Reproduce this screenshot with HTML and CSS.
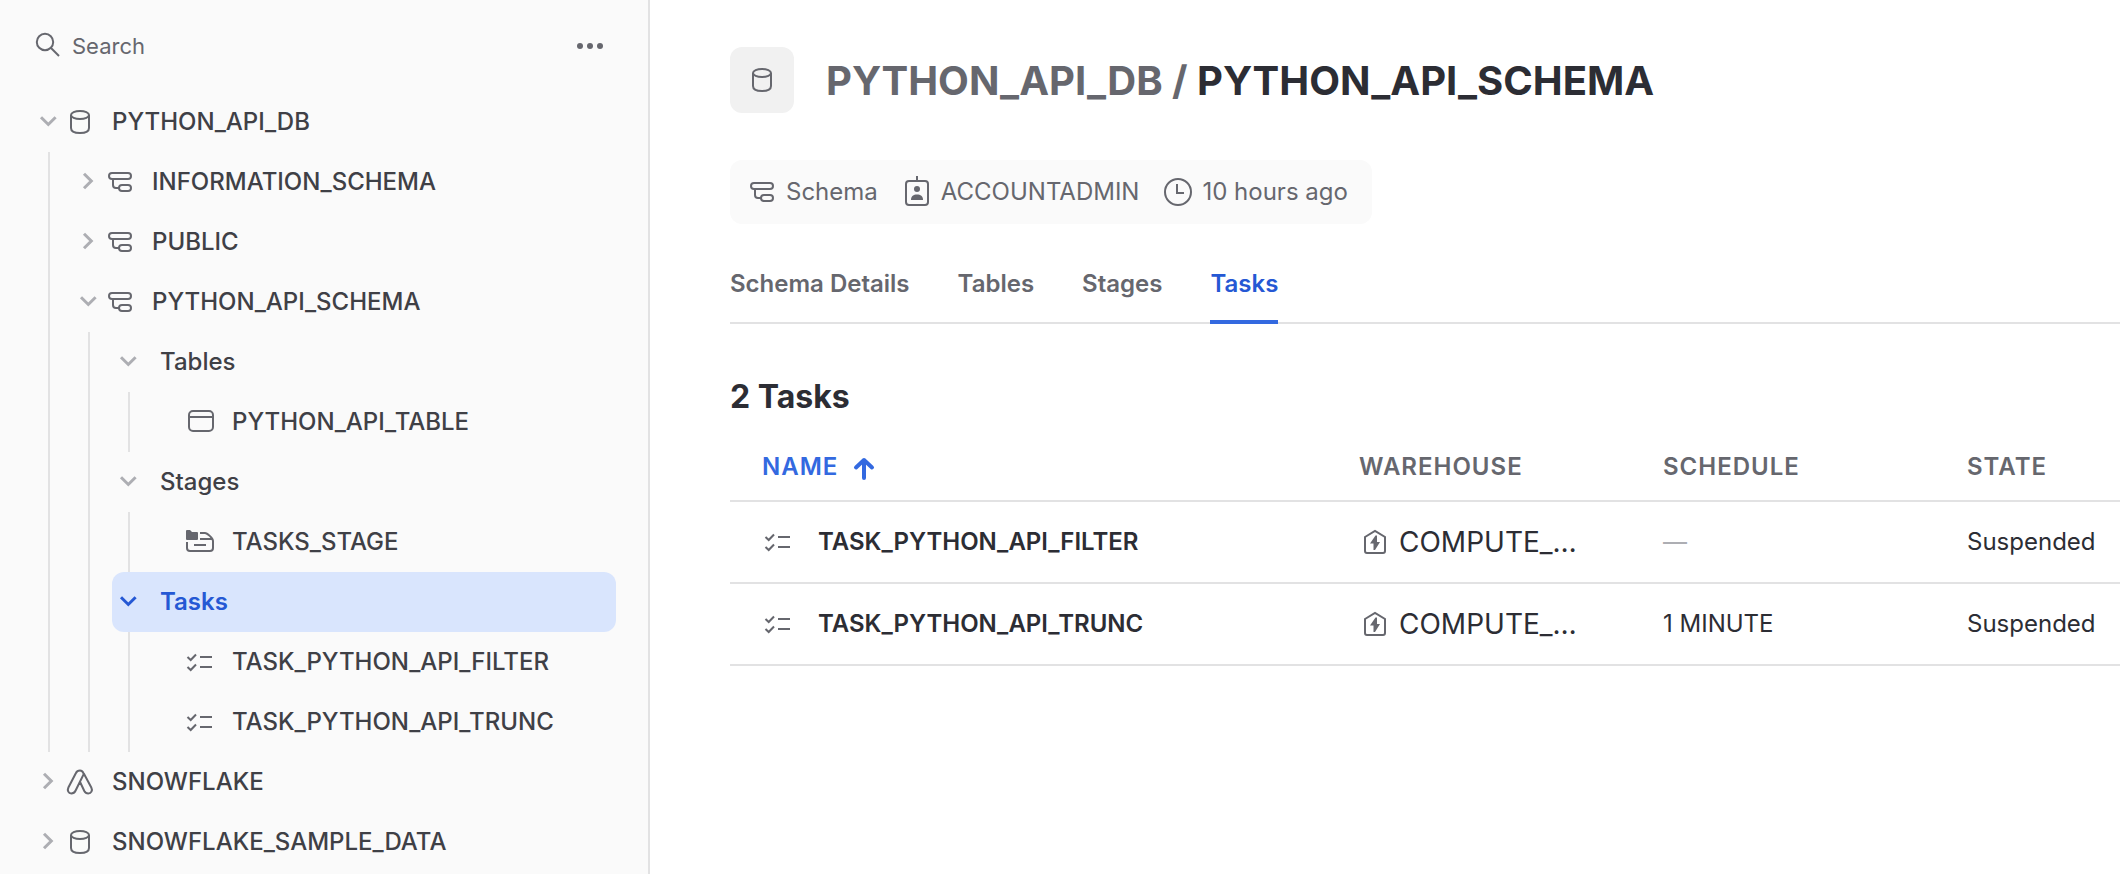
FILE: index.html
```html
<!DOCTYPE html>
<html lang="en">
<head>
<meta charset="utf-8">
<title>PYTHON_API_SCHEMA</title>
<link rel="stylesheet" href="styles.css">
</head>
<body>
<svg class="sprite" aria-hidden="true">
  <symbol id="i-search" viewBox="0 0 28 28"><circle cx="11" cy="10" r="8.200"/><path d="M17 16 25 24"/></symbol>
  <symbol id="i-down" viewBox="0 0 28 28"><path d="M7 9.200 14.300 16.500l7.300-7.300"/></symbol>
  <symbol id="i-right" viewBox="0 0 28 28"><path d="M10 5.700 17.300 13l-7.300 7.300"/></symbol>
  <symbol id="i-db" viewBox="0 0 28 28"><ellipse cx="14" cy="7" rx="9" ry="4"/><path d="M5 7v13c0 3.500 2.500 5 9 5s9-1.500 9-5V7"/></symbol>
  <symbol id="i-schema" viewBox="0 0 28 28"><rect x="3" y="5" width="22" height="6" rx="3"/><rect x="13" y="17" width="12" height="6" rx="3"/><path d="M7 11v6c0 2 1 3 3 3h3"/></symbol>
  <symbol id="i-table" viewBox="0 0 28 28"><rect x="3" y="3" width="24" height="20" rx="4"/><path d="M3 9h24"/></symbol>
  <symbol id="i-stage" viewBox="0 0 28 28"><path class="solid" d="M0 3a1 1 0 0 1 1-1h3l2 2h5a1 1 0 0 1 1 1v6a1 1 0 0 1-1 1H1a1 1 0 0 1-1-1z"/><path d="M14 5h5c2 0 8 5 8 8v7c0 2-1 3-3 3H4c-2 0-3-1-3-3v-6M14 11h12M8 17h12"/></symbol>
  <symbol id="i-task" viewBox="0 0 28 28"><path d="m1.500 9 3.200 3 5.300-5.500M1.500 19l3.200 3 5.300-5.500M14 9h12M14 19h12"/></symbol>
  <symbol id="i-app" viewBox="0 0 28 28"><path d="M14 2.500c-2 0-3.400 1-4.200 2.700L2.400 19.500C1 22.500 2.500 25.500 5.300 25.500c2 0 3.400-1 4.200-2.700L17.800 6C17 3.700 16 2.500 14 2.500zM17.800 5.500l7.500 14c1.600 3-.2 6-3 6-2 0-3.200-.9-4-2.500l-4-8.500"/></symbol>
  <symbol id="i-role" viewBox="0 0 28 32"><rect x="3" y="5" width="22" height="24" rx="3"/><path d="M14 0v5"/><circle class="solid" cx="14" cy="13" r="3"/><path class="solid" d="M8 24c0-4 2.500-5.500 6-5.500s6 1.500 6 5.500z"/></symbol>
  <symbol id="i-clock" viewBox="0 0 28 28"><circle cx="14" cy="14" r="13"/><path d="M13 6v9h7"/></symbol>
  <symbol id="i-wh" viewBox="0 0 28 28"><path d="M6 9 16 3l10 6v14q0 2-2 2H8q-2 0-2-2z"/><path class="solid" d="M16.500 7.500 11 15.500h3.500v6.500h1.500l5-8h-3V7.500z"/></symbol>
  <symbol id="i-up" viewBox="0 0 24 28"><path d="M12 25V7M4 14.500 12 7l8 7.500"/></symbol>
</svg>
<div class="app">
  <aside class="sidebar">
    <div class="search">
      <label class="search-label" for="q"><svg class="icon"><use href="#i-search"/></svg></label>
      <input id="q" class="search-input" type="text" placeholder="Search" aria-label="Search">
      <button class="more" type="button" aria-label="More options"><i></i><i></i><i></i></button>
    </div>
    <nav class="tree" aria-label="Databases">
      <button class="node"><svg class="icon chev"><use href="#i-down"/></svg><svg class="icon"><use href="#i-db"/></svg><span>PYTHON_API_DB</span></button>
      <div class="branch">
        <button class="node"><svg class="icon chev"><use href="#i-right"/></svg><svg class="icon"><use href="#i-schema"/></svg><span>INFORMATION_SCHEMA</span></button>
        <button class="node"><svg class="icon chev"><use href="#i-right"/></svg><svg class="icon"><use href="#i-schema"/></svg><span>PUBLIC</span></button>
        <button class="node"><svg class="icon chev"><use href="#i-down"/></svg><svg class="icon"><use href="#i-schema"/></svg><span>PYTHON_API_SCHEMA</span></button>
        <div class="branch">
          <button class="node group"><svg class="icon chev"><use href="#i-down"/></svg><span>Tables</span></button>
          <div class="branch">
            <button class="node leaf"><svg class="icon"><use href="#i-table"/></svg><span>PYTHON_API_TABLE</span></button>
          </div>
          <button class="node group"><svg class="icon chev"><use href="#i-down"/></svg><span>Stages</span></button>
          <div class="branch">
            <button class="node leaf"><svg class="icon"><use href="#i-stage"/></svg><span>TASKS_STAGE</span></button>
          </div>
          <button class="node group selected"><svg class="icon chev"><use href="#i-down"/></svg><span>Tasks</span></button>
          <div class="branch">
            <button class="node leaf"><svg class="icon"><use href="#i-task"/></svg><span>TASK_PYTHON_API_FILTER</span></button>
            <button class="node leaf"><svg class="icon"><use href="#i-task"/></svg><span>TASK_PYTHON_API_TRUNC</span></button>
          </div>
        </div>
      </div>
      <button class="node"><svg class="icon chev"><use href="#i-right"/></svg><svg class="icon"><use href="#i-app"/></svg><span>SNOWFLAKE</span></button>
      <button class="node"><svg class="icon chev"><use href="#i-right"/></svg><svg class="icon"><use href="#i-db"/></svg><span>SNOWFLAKE_SAMPLE_DATA</span></button>
    </nav>
  </aside>
  <main class="main">
    <header class="title">
      <span class="tile"><svg class="icon"><use href="#i-db"/></svg></span>
      <h1><a class="crumb" href="#">PYTHON_API_DB /</a> PYTHON_API_SCHEMA</h1>
    </header>
    <div class="meta">
      <span class="fact"><svg class="icon"><use href="#i-schema"/></svg>Schema</span>
      <span class="fact"><svg class="icon role"><use href="#i-role"/></svg>ACCOUNTADMIN</span>
      <span class="fact"><svg class="icon"><use href="#i-clock"/></svg>10 hours ago</span>
    </div>
    <nav class="tabs" aria-label="Schema sections">
      <a class="tab" href="#">Schema Details</a>
      <a class="tab" href="#">Tables</a>
      <a class="tab" href="#">Stages</a>
      <a class="tab active" href="#" aria-current="page">Tasks</a>
    </nav>
    <h2>2 Tasks</h2>
    <table class="tasks">
      <colgroup><col class="c-name"><col class="c-mid"><col class="c-mid"><col></colgroup>
      <thead>
        <tr>
          <th scope="col"><button class="sort" type="button">NAME<svg class="icon up"><use href="#i-up"/></svg></button></th>
          <th scope="col">WAREHOUSE</th><th scope="col">SCHEDULE</th><th scope="col">STATE</th>
        </tr>
      </thead>
      <tbody>
        <tr>
          <td><span class="task"><svg class="icon"><use href="#i-task"/></svg>TASK_PYTHON_API_FILTER</span></td>
          <td><span class="wh"><svg class="icon"><use href="#i-wh"/></svg>COMPUTE_…</span></td>
          <td class="none">—</td><td>Suspended</td>
        </tr>
        <tr>
          <td><span class="task"><svg class="icon"><use href="#i-task"/></svg>TASK_PYTHON_API_TRUNC</span></td>
          <td><span class="wh"><svg class="icon"><use href="#i-wh"/></svg>COMPUTE_…</span></td>
          <td>1 MINUTE</td><td>Suspended</td>
        </tr>
      </tbody>
    </table>
  </main>
</div>
</body>
</html>
```

FILE: styles.css
```css
* { box-sizing: border-box; }
body {
  margin: 0;
  font-family: Inter, "Liberation Sans", sans-serif;
  font-size: 24px;
  line-height: 32px;
  color: #2c2d34;
  background: #fff;
}
button, input { font: inherit; color: inherit; background: none; border: 0; padding: 0; margin: 0; }
a { color: inherit; text-decoration: none; }
.sprite { position: absolute; width: 0; height: 0; }
.icon {
  flex: none;
  width: 28px;
  height: 28px;
  fill: none;
  stroke: #66676e;
  stroke-width: 2;
}
.solid { fill: #66676e; stroke: none; }

.app { display: flex; min-height: 100vh; }

.sidebar {
  flex: none;
  width: 650px;
  background: #fafafa;
  border-right: 2px solid #e2e2e3;
}
.search { display: flex; align-items: center; height: 92px; padding: 0 45px 0 34px; }
.search-label { display: flex; }
.search-input { flex: 1; min-width: 0; margin-left: 10px; font-size: 22px; color: #66676e; outline: 0; }
.search-input::placeholder { color: #66676e; opacity: 1; }
.more { display: flex; gap: 4px; }
.more i { width: 6px; height: 6px; border-radius: 50%; background: #66676e; }

.tree { padding-left: 34px; }
.node {
  display: flex;
  align-items: center;
  width: calc(100% - 32px);
  height: 60px;
  gap: 4px;
  border-radius: 12px;
  font-weight: 500;
  color: #3f4046;
  text-align: left;
}
.node span { margin-left: 14px; }
.chev { stroke: #adaeb3; stroke-width: 3; }
.branch { margin-left: 14px; padding-left: 24px; border-left: 2px solid #e2e2e3; }
.group { width: calc(100% - 30px); margin-left: -2px; padding-left: 2px; }
.leaf { padding-left: 32px; }
.selected { background: #d9e5fd; color: #2558d4; font-weight: 600; }
.selected .chev { stroke: #2558d4; }

.main { flex: 1; min-width: 0; padding: 47px 0 0 80px; }
.title { display: flex; align-items: center; gap: 32px; }
.tile { display: flex; align-items: center; justify-content: center; width: 64px; height: 66px; border-radius: 12px; background: #f1f1f1; }
h1 { margin: 0; padding-top: 2px; font-size: 40px; line-height: 48px; font-weight: 700; }
.crumb { color: #66676e; }
.meta {
  display: flex;
  align-items: center;
  gap: 25px;
  width: max-content;
  height: 64px;
  margin-top: 47px;
  padding: 0 24px 0 18px;
  border-radius: 12px;
  background: #fafafa;
  color: #66676e;
}
.fact { display: flex; align-items: center; gap: 10px; }
.role { height: 32px; }

.tabs { display: flex; gap: 48px; height: 100px; border-bottom: 2px solid #e2e2e3; }
.tab { display: flex; padding-top: 44px; height: 100px; font-weight: 600; color: #66676e; }
.active { color: #2558d4; border-bottom: 4px solid #3369e0; }
h2 { margin: 53px 0 0; font-size: 32px; line-height: 40px; font-weight: 700; }

.tasks { width: 100%; margin-top: 15px; border-collapse: separate; border-spacing: 0; table-layout: fixed; }
.c-name { width: 597px; }
.c-mid { width: 304px; }
th, td { padding: 0 0 0 32px; text-align: left; border-bottom: 2px solid #e2e2e3; white-space: nowrap; }
th { height: 70px; padding-top: 2px; font-weight: 600; letter-spacing: 1px; color: #66676e; }
td { height: 82px; }
.sort { display: flex; align-items: center; gap: 14px; letter-spacing: 1px; color: #3369e0; }
.up { width: 24px; stroke: #3369e0; stroke-width: 4; stroke-linecap: round; stroke-linejoin: round; }
.task { display: flex; align-items: center; gap: 26px; padding-left: 2px; font-weight: 600; }
.wh { display: flex; align-items: center; gap: 12px; font-size: 28px; }
.none { color: #adaeb3; }
```
